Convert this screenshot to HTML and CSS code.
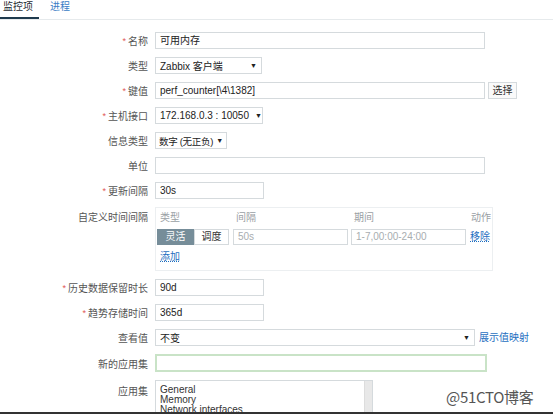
FILE: index.html
```html
<!DOCTYPE html>
<html>
<head>
<meta charset="utf-8">
<link rel="stylesheet" href="styles.css">
</head>
<body>
<div class="tabs">
  <span class="tab active">监控项</span>
  <span class="tab link">进程</span>
</div>
<form class="form">
  <label class="lbl"><span class="req">*</span> 名称</label>
  <div class="field"><div class="inp w330">可用内存</div></div>

  <label class="lbl">类型</label>
  <div class="field"><div class="sel w107"><span>Zabbix 客户端</span><i>▼</i></div></div>

  <label class="lbl"><span class="req">*</span> 键值</label>
  <div class="field"><div class="inp w330">perf_counter[\4\1382]</div><div class="btn">选择</div></div>

  <label class="lbl"><span class="req">*</span> 主机接口</label>
  <div class="field"><div class="sel w108"><span>172.168.0.3 : 10050</span><i>▼</i></div></div>

  <label class="lbl">信息类型</label>
  <div class="field"><div class="sel w72 tight"><span>数字 (无正负)</span><i>▼</i></div></div>

  <label class="lbl">单位</label>
  <div class="field"><div class="inp w330"></div></div>

  <label class="lbl"><span class="req">*</span> 更新间隔</label>
  <div class="field"><div class="inp w109">30s</div></div>

  <label class="lbl top">自定义时间间隔</label>
  <div class="field">
    <div class="intervals">
      <div class="ih">类型</div><div class="ih">间隔</div><div class="ih">期间</div><div class="ih act">动作</div>
      <div class="seg"><span class="on">灵活</span><span>调度</span></div>
      <div class="inp ph">50s</div>
      <div class="inp ph">1-7,00:00-24:00</div>
      <a class="lnk">移除</a>
      <a class="lnk add">添加</a>
    </div>
  </div>

  <label class="lbl"><span class="req">*</span> 历史数据保留时长</label>
  <div class="field"><div class="inp w109">90d</div></div>

  <label class="lbl"><span class="req">*</span> 趋势存储时间</label>
  <div class="field"><div class="inp w109">365d</div></div>

  <label class="lbl">查看值</label>
  <div class="field"><div class="sel w320"><span>不变</span><i>▼</i></div><a class="lnk plain">展示值映射</a></div>

  <label class="lbl">新的应用集</label>
  <div class="field"><div class="inp w332 green"></div></div>

  <label class="lbl top2">应用集</label>
  <div class="field">
    <div class="list">
      <div class="items"><div>General</div><div>Memory</div><div>Network interfaces</div></div>
      <div class="sb"></div>
    </div>
  </div>
</form>
<div class="wm">@51CTO博客</div>
<div class="bottombar"></div>
</body>
</html>
```

FILE: styles.css
```css
html, body { margin: 0; padding: 0; background: #fff; }
body {
  width: 553px; height: 414px; overflow: hidden; position: relative;
  font-family: "Liberation Sans", "Noto Sans CJK SC", sans-serif;
  font-size: 10px; color: #333;
}
.tabs {
  height: 19px; border-bottom: 1px solid #e6eaec;
  display: flex; align-items: flex-end;
}
.tab { padding: 0 4px 0 3px; height: 17px; line-height: 13px; font-size: 10px; margin-right: 8px; }
.tab.active { border-bottom: 2px solid #1f3a4d; color: #1f2c33; padding-right: 6px; }
.tab.link { color: #3a7cc5; height: 19px; }
.form {
  display: grid; grid-template-columns: 148px 1fr; column-gap: 7px; row-gap: 8px;
  margin-top: 12px;
}
.lbl { text-align: right; display: flex; align-items: center; justify-content: flex-end; color: #555; white-space: nowrap; }
.lbl.top { align-items: flex-start; padding-top: 2px; }
.lbl.top2 { align-items: flex-start; padding-top: 3px; }
.req { color: #e05555; margin-right: 2px; font-size: 9px; }
.field { display: flex; align-items: center; }
.inp {
  box-sizing: border-box; height: 17px; border: 1px solid #d5dadd; background: #fff;
  padding: 0 4px; line-height: 15px; color: #222; white-space: nowrap; overflow: hidden;
}
.w330 { width: 330px; } .w332 { width: 332px; } .w109 { width: 109px; }
.inp.green { height: 18px; border: 2px solid #c9e3c7; }
.sel {
  box-sizing: border-box; height: 17px; border: 1px solid #d5dadd; background: #fff;
  padding: 0 4px; display: flex; align-items: center; justify-content: space-between; white-space: nowrap; color: #222;
}
.sel i { font-style: normal; font-size: 7px; color: #222; margin-left: 6px; }
.sel.tight { padding: 0 3px; font-size: 9.5px; letter-spacing: -0.3px; }
.sel.tight i { margin-left: 2px; }
.w107 { width: 107px; } .w108 { width: 108px; } .w72 { width: 72px; } .w320 { width: 320px; }
.btn {
  box-sizing: border-box; height: 17px; width: 29px; margin-left: 3px;
  border: 1px solid #d5dadd; background: #fafafa; text-align: center; line-height: 15px; color: #333;
}
.intervals {
  box-sizing: border-box; width: 338px; border: 1px solid #eceff1;
  display: grid; grid-template-columns: 76px 118px 119px 1fr;
  padding: 2px 0 6px 1px;
}
.ih { color: #9aa0a4; padding-left: 3px; height: 16px; line-height: 16px; margin-bottom: 3px; white-space: nowrap; }
.ih.act { padding: 0; text-align: right; margin-left: -6px; margin-right: 1px; }
.seg { display: flex; height: 16px; }
.seg span {
  box-sizing: border-box; width: 35px; height: 16px; line-height: 14px; text-align: center;
  border: 1px solid #d5dadd; background: #fff; color: #333;
}
.seg span.on { width: 37px; background: #768d99; border-color: #768d99; color: #fff; }
.intervals .inp { height: 16px; line-height: 14px; width: 115px; }
.ph { color: #a8adb0 !important; }
.lnk { color: #1f6fbf; text-decoration: underline dotted; line-height: 16px; white-space: nowrap; }
.lnk.add { grid-column: 1 / 2; padding-left: 3px; margin-top: 5px; line-height: 14px; justify-self: start; }
.lnk.plain { text-decoration: none; margin-left: 4px; }
.list {
  box-sizing: border-box; width: 218px; height: 40px; border: 1px solid #d5dadd; border-bottom: none;
  display: flex; justify-content: space-between; overflow: hidden;
}
.items { padding: 4px 4px 0; line-height: 10px; color: #333; }
.sb { width: 7px; background: #e8e8e8; border-left: 1px solid #ddd; }
.wm {
  position: absolute; left: 446px; top: 386px; font-size: 15px; color: #555;
  font-family: "Noto Sans CJK SC", "Liberation Sans", sans-serif; letter-spacing: -0.3px;
  text-shadow: 0 0 2px #fff;
}
.bottombar { position: absolute; left: 0; right: 0; bottom: 0; height: 2px; background: #333; }
```
